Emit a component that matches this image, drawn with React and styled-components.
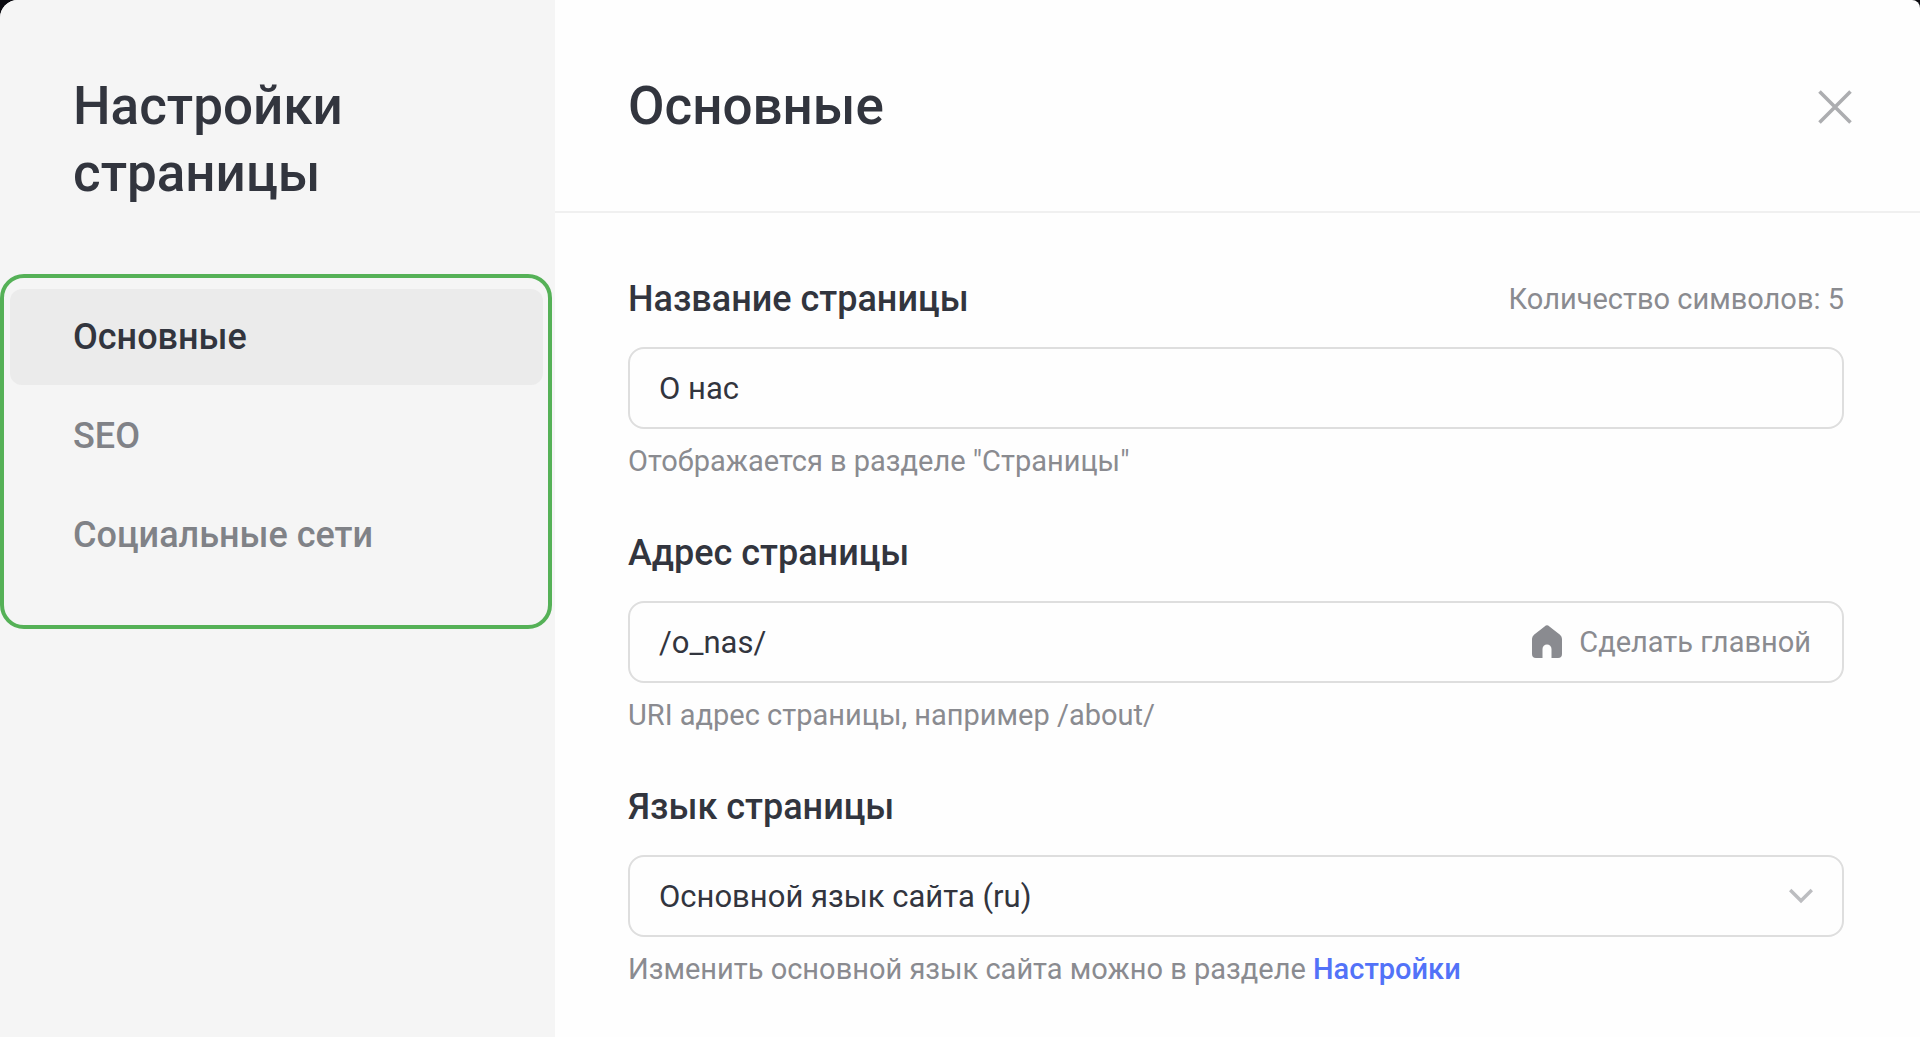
import React, { useState } from 'react';
import styled, { createGlobalStyle } from 'styled-components';

const SECTIONS = ['Основные', 'SEO', 'Социальные сети'];

function App() {
  const [section, setSection] = useState('Основные');
  const [name, setName] = useState('О нас');
  const [address, setAddress] = useState('/o_nas/');

  return (
    <>
      <GlobalStyle />
      <Panel>
        <Sidebar>
          <SidebarTitle>Настройки страницы</SidebarTitle>
          <Nav>
            {SECTIONS.map(item => (
              <NavButton
                key={item}
                type="button"
                $active={item === section}
                onClick={() => setSection(item)}
              >
                {item}
              </NavButton>
            ))}
          </Nav>
        </Sidebar>
        <Main>
          <Header>
            <Title>{section}</Title>
            <CloseButton type="button" aria-label="Закрыть">
              <svg width="34" height="34" viewBox="0 0 34 34">
                <path
                  d="M1.5 1.5 32.5 32.5M32.5 1.5 1.5 32.5"
                  stroke="#acadb0"
                  strokeWidth="3.6"
                />
              </svg>
            </CloseButton>
          </Header>
          <Form>
            <Field>
              <LabelRow>
                <Label htmlFor="name">Название страницы</Label>
                <Counter>Количество символов: {name.length}</Counter>
              </LabelRow>
              <Control>
                <Input
                  id="name"
                  type="text"
                  value={name}
                  onChange={e => setName(e.target.value)}
                />
              </Control>
              <Hint>Отображается в разделе "Страницы"</Hint>
            </Field>
            <Field>
              <LabelRow>
                <Label htmlFor="address">Адрес страницы</Label>
              </LabelRow>
              <Control>
                <Input
                  id="address"
                  type="text"
                  value={address}
                  onChange={e => setAddress(e.target.value)}
                />
                <HomeButton type="button">
                  <svg width="32" height="34" viewBox="0 0 32 34">
                    <path
                      d="M13.6 1.4a3.6 3.6 0 0 1 4.8 0L29 9.8a5.6 5.6 0 0 1 2 4.3V29a4 4 0 0 1-4 4H20.500V24a4.500 4.500 0 0 0-9 0V33H5A4 4 0 0 1 1 29V14.100a5.600 5.600 0 0 1 2-4.300Z"
                      fill="#8a8b90"
                    />
                  </svg>
                  Сделать главной
                </HomeButton>
              </Control>
              <Hint>URI адрес страницы, например /about/</Hint>
            </Field>
            <Field>
              <LabelRow>
                <Label htmlFor="language">Язык страницы</Label>
              </LabelRow>
              <Control>
                <Select id="language" defaultValue="ru">
                  <option value="ru">Основной язык сайта (ru)</option>
                </Select>
                <Chevron width="24" height="16" viewBox="0 0 24 16">
                  <path
                    d="M1.2 2 12 12.8 22.8 2"
                    fill="none"
                    stroke="#bcbdc0"
                    strokeWidth="3.4"
                  />
                </Chevron>
              </Control>
              <Hint>
                Изменить основной язык сайта можно в разделе{' '}
                <HintLink href="#settings">Настройки</HintLink>
              </Hint>
            </Field>
          </Form>
        </Main>
      </Panel>
    </>
  );
}

const GlobalStyle = createGlobalStyle`
  * {
    box-sizing: border-box;
  }

  body {
    margin: 0;
    background: #0b0b10;
    color: #32353e;
    font-family: Roboto, 'Noto Sans', sans-serif;
  }

  button,
  input,
  select {
    margin: 0;
    padding: 0;
    border: 0;
    background: none;
    color: inherit;
    font: inherit;
  }

  button {
    cursor: pointer;
  }

  h1,
  h2,
  p {
    margin: 0;
  }

  svg {
    display: block;
  }
`;

const Panel = styled.div`
  display: flex;
  min-height: 100vh;
  border-radius: 18px 8px 0 0;
  background: #fefefe;
  overflow: hidden;
`;

const Sidebar = styled.aside`
  flex: 0 0 555px;
  padding-top: 73px;
  background: #f5f5f5;
`;

const SidebarTitle = styled.h1`
  padding: 0 160px 0 73px;
  font-size: 53px;
  font-weight: 500;
  line-height: 67px;
`;

const Nav = styled.nav`
  display: flex;
  flex-direction: column;
  gap: 3px;
  margin: 67px 3px 0 0;
  padding: 11px 5px 42px 6px;
  border: 4px solid #55b157;
  border-radius: 24px;
`;

const NavButton = styled.button`
  height: 96px;
  padding: 0 63px;
  border-radius: 12px;
  background: ${({ $active }) => ($active ? '#ebebeb' : 'transparent')};
  color: ${({ $active }) => ($active ? '#32353e' : '#808287')};
  font-size: 36px;
  font-weight: 500;
  text-align: left;
`;

const Main = styled.main`
  flex: 1;
  min-width: 0;
`;

const Header = styled.header`
  display: flex;
  justify-content: space-between;
  align-items: center;
  padding: 73px 68px 71px 73px;
  border-bottom: 2px solid #f0f0f0;
`;

const Title = styled.h2`
  font-size: 53px;
  font-weight: 500;
  line-height: 67px;
`;

const CloseButton = styled.button`
  display: flex;
`;

const Form = styled.form`
  display: flex;
  flex-direction: column;
  gap: 48px;
  padding: 62px 76px 48px 73px;
`;

const Field = styled.div`
  display: flex;
  flex-direction: column;
`;

const LabelRow = styled.div`
  display: flex;
  justify-content: space-between;
  align-items: center;
  margin-bottom: 24px;
`;

const Label = styled.label`
  font-size: 36px;
  font-weight: 500;
  line-height: 48px;
`;

const Counter = styled.span`
  color: #8a8b90;
  font-size: 29px;
`;

const Control = styled.div`
  display: flex;
  align-items: center;
  height: 82px;
  border: 2px solid #dedede;
  border-radius: 16px;
`;

const Input = styled.input`
  flex: 1;
  min-width: 0;
  height: 100%;
  padding: 0 29px;
  font-size: 31px;
  outline: none;
`;

const HomeButton = styled.button`
  display: flex;
  align-items: center;
  gap: 16px;
  margin-right: 31px;
  color: #8a8b90;
  font-size: 29px;
`;

const Select = styled.select`
  flex: 1;
  height: 100%;
  margin-right: -56px;
  padding: 0 60px 0 29px;
  font-size: 31px;
  appearance: none;
  outline: none;
`;

const Chevron = styled.svg`
  margin-right: 29px;
  pointer-events: none;
`;

const Hint = styled.p`
  margin-top: 12px;
  color: #8a8b90;
  font-size: 29px;
  line-height: 40px;
`;

const HintLink = styled.a`
  color: #5272f8;
  font-weight: 500;
  text-decoration: none;
`;

export default App;
